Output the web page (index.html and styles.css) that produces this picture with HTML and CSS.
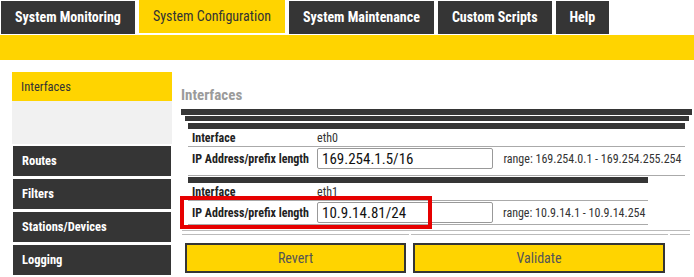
FILE: index.html
```html
<!DOCTYPE html>
<html lang="en">
<head>
  <meta charset="UTF-8" />
  <meta name="viewport" content="width=device-width, initial-scale=1.0" />
  <title>System Configuration - Interfaces</title>
  <link rel="stylesheet" href="styles.css">
</head>
<body>
  <nav class="tabs">
    <a class="tab">System Monitoring</a>
    <a class="tab active">System Configuration</a>
    <a class="tab">System Maintenance</a>
    <a class="tab">Custom Scripts</a>
    <a class="tab">Help</a>
  </nav>
  <div class="subbar"></div>

  <div class="layout">
    <aside class="side">
      <a class="side-item active">Interfaces</a>
      <div class="side-sub"></div>
      <a class="side-item">Routes</a>
      <a class="side-item">Filters</a>
      <a class="side-item">Stations/Devices</a>
      <a class="side-item">Logging</a>
      <a class="side-item"></a>
    </aside>

    <main class="content">
      <h1>Interfaces</h1>
      <div class="frame outer">
        <div class="frame inner">
          <table class="iface wide">
            <tr class="name-row">
              <th>Interface</th>
              <td colspan="2">eth0</td>
            </tr>
            <tr class="ip-row first">
              <th>IP Address/prefix length</th>
              <td><input type="text" value="169.254.1.5/16" /></td>
              <td class="range">range: 169.254.0.1 - 169.254.255.254</td>
            </tr>
          </table>
          <table class="iface">
            <tr class="name-row">
              <th>Interface</th>
              <td colspan="2">eth1</td>
            </tr>
            <tr class="ip-row">
              <th>IP Address/prefix length</th>
              <td><input type="text" value="10.9.14.81/24" /></td>
              <td class="range">range: 10.9.14.1 - 10.9.14.254</td>
            </tr>
          </table>
        </div>
      </div>

      <div class="rule"></div>
      <div class="rule-cells">
        <span></span><span></span><span></span>
      </div>

      <div class="actions">
        <button class="revert">Revert</button>
        <button class="validate">Validate</button>
      </div>

      <div class="highlight"></div>
    </main>
  </div>
</body>
</html>
```

FILE: styles.css
```css
* {
  box-sizing: border-box;
}
body {
  margin: 0;
  padding: 0;
  font-family: 'Roboto Condensed', 'Liberation Sans Narrow', Roboto, sans-serif;
  font-stretch: condensed;
  background: #fff;
  color: #333;
}
.tabs {
  display: flex;
  align-items: flex-start;
  gap: 4px;
  height: 34px;
  padding-left: 1px;
}
.tab {
  display: block;
  height: 33px;
  margin-top: 1px;
  padding: 0 14px;
  line-height: 33px;
  background: #353535;
  color: #fff;
  font-size: 14px;
  font-weight: bold;
  cursor: pointer;
}
.tab.active {
  margin-top: 0;
  padding: 0 14px;
  background: #ffd400;
  color: #333;
  font-weight: normal;
}
.subbar {
  height: 25px;
  margin-top: 1px;
  background: #ffd400;
}
.layout {
  display: flex;
  gap: 9px;
  padding: 12px 0 0 12px;
}
.side {
  width: 160px;
  flex-shrink: 0;
}
.side-item {
  display: block;
  height: 30px;
  margin: 0 1px 3px;
  padding-left: 9px;
  line-height: 30px;
  background: #353535;
  color: #fff;
  font-size: 12.5px;
  font-weight: bold;
  cursor: pointer;
}
.side-item.active {
  height: 29px;
  margin: 0;
  line-height: 29px;
  background: #ffd400;
  color: #333;
  font-weight: normal;
}
.side-sub {
  height: 43px;
  margin-bottom: 2px;
  background: #f1f1f1;
}
.content {
  position: relative;
  width: 511px;
  padding-top: 13px;
}
h1 {
  margin: 0 0 4px;
  height: 20px;
  line-height: 20px;
  font-size: 15px;
  font-weight: bold;
  color: #9b9b9b;
}
.frame.outer {
  border-top: 6px solid #353535;
  padding: 1px 3px 0 4px;
}
.frame.inner {
  border-top: 5px solid #353535;
  padding: 2px 4px 0 3px;
}
.iface {
  border-collapse: separate;
  border-spacing: 0;
  border-top: 6px solid #353535;
  width: 460px;
  margin-top: 1px;
  font-size: 12px;
}
.iface:first-child {
  margin-top: 0;
}
.iface.wide {
  width: 100%;
}
.iface th,
.iface td {
  border-bottom: 1px solid #aaa;
  white-space: nowrap;
}
.iface th {
  width: 129px;
  padding: 0 0 0 4px;
  text-align: left;
  font-weight: bold;
  color: #222;
}
.iface td {
  padding: 0;
}
.name-row th,
.name-row td {
  padding-top: 3px;
  padding-bottom: 1px;
  line-height: 13px;
  vertical-align: top;
}
.ip-row th,
.ip-row td {
  padding-top: 1px;
  padding-bottom: 1px;
  vertical-align: middle;
}
.ip-row.first th,
.ip-row.first td {
  padding-bottom: 6px;
}
.iface td input {
  display: block;
  width: 176px;
  height: 21px;
  margin: 0;
  padding: 0 4px;
  border: 1px solid #999;
  border-radius: 2px;
  font-family: inherit;
  font-stretch: inherit;
  font-size: 15px;
  color: #111;
}
.iface .range {
  padding-left: 7px;
  color: #333;
}
.rule {
  height: 1px;
  margin: 5px 2px 0 1px;
  background: #bbb;
}
.rule-cells {
  display: flex;
  gap: 2px;
  margin: 3px 2px 0 1px;
}
.rule-cells span {
  height: 1px;
  background: #bbb;
}
.rule-cells span:nth-child(1) {
  width: 227px;
}
.rule-cells span:nth-child(2) {
  width: 257px;
}
.rule-cells span:nth-child(3) {
  flex: 1;
}
.actions {
  display: flex;
  gap: 7px;
  margin: 8px 0 0 4px;
}
.actions button {
  height: 30px;
  border: 2px solid #353535;
  background: #ffd400;
  color: #555;
  font-family: inherit;
  font-stretch: inherit;
  font-size: 14px;
  cursor: pointer;
}
.actions .revert {
  width: 221px;
}
.actions .validate {
  width: 252px;
}
.highlight {
  position: absolute;
  left: -1px;
  top: 124px;
  width: 252px;
  height: 33px;
  border: 4px solid #e60000;
  pointer-events: none;
}
```
